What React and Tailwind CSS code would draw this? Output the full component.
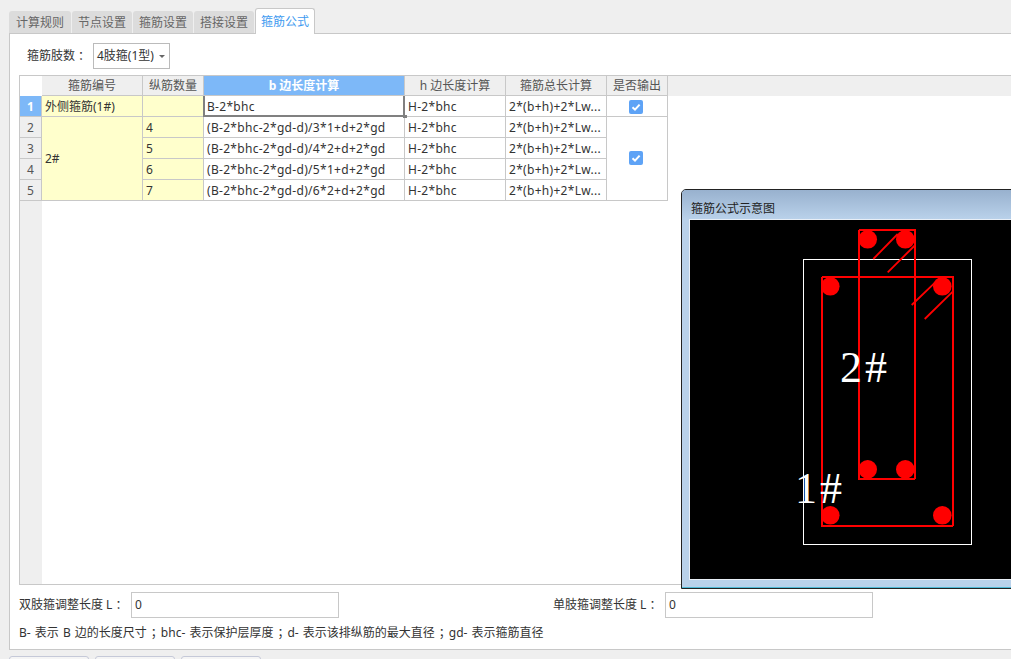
const cell = "border-r border-b border-[#c8c8c8] flex items-center overflow-hidden whitespace-nowrap pt-px";
const num = `${cell} bg-[#efefef] justify-center text-[#555]`;
const head = `${cell} bg-[#efefef] justify-center text-[#555]`;
const headActive = `${cell} bg-[#7db8f8] justify-center text-white font-bold`;
const txt = `${cell} bg-white pl-[3px] text-[#333] tracking-[0.3px]`;
const yel = `${cell} bg-[#ffffcc] pl-[3px] text-[#333]`;
const punct = "font-['Noto_Sans_CJK_TC']";

function Check() {
  return (
    <span className="w-[14px] h-[14px] rounded-[2px] bg-[#5ea3f6] flex items-center justify-center">
      <svg width="10" height="10" viewBox="0 0 10 10" fill="none">
        <path d="M1.5 5.2 L4 7.6 L8.6 2.6" stroke="#fff" strokeWidth="2" />
      </svg>
    </span>
  );
}

function Tab({ w, active, children }) {
  return (
    <div
      className={
        active
          ? `${w} h-[26px] -mb-px bg-white border border-b-0 border-[#c8c8c8] rounded-t-[3px] text-[#3f9bf0] flex items-center justify-center relative`
          : `${w} h-[22px] bg-[#dcdcdc] rounded-t-[3px] text-[#666] flex items-center justify-center pt-px`
      }
    >
      {children}
    </div>
  );
}

const rows = [
  ["2", "4", "(B-2*bhc-2*gd-d)/3*1+d+2*gd"],
  ["3", "5", "(B-2*bhc-2*gd-d)/4*2+d+2*gd"],
  ["4", "6", "(B-2*bhc-2*gd-d)/5*1+d+2*gd"],
  ["5", "7", "(B-2*bhc-2*gd-d)/6*2+d+2*gd"],
];

function Diagram() {
  return (
    <svg width="321" height="360" viewBox="690 220 321 360" className="block">
      <rect x="803.5" y="259.5" width="168" height="285" fill="none" stroke="#fff" strokeWidth="1" shapeRendering="crispEdges" />
      <g fill="none" stroke="#f00" strokeWidth="2">
        <rect x="822" y="277" width="131" height="249" rx="1" shapeRendering="crispEdges" />
        <rect x="859" y="230" width="56" height="249" rx="1" shapeRendering="crispEdges" />
        <path strokeWidth="1.8" d="M873.3 259 L897.7 234 M887.7 272.3 L915.3 245 M911.7 305 L936 281.7 M924.7 319 L952.7 291.7" />
      </g>
      <g fill="#f00">
        <circle cx="867.7" cy="239.3" r="9.3" />
        <circle cx="905.3" cy="239.3" r="9.3" />
        <circle cx="830.3" cy="286.3" r="9.3" />
        <circle cx="942.3" cy="286.3" r="9.3" />
        <circle cx="867.7" cy="469.3" r="9.3" />
        <circle cx="905.3" cy="469.3" r="9.3" />
        <circle cx="830.3" cy="515.3" r="9.3" />
        <circle cx="942.3" cy="515.3" r="9.3" />
      </g>
      <g fill="#fff" fontFamily="'Liberation Serif', serif" fontSize="44">
        <text x="840" y="382" letterSpacing="3">2#</text>
        <text x="795" y="503" letterSpacing="3">1#</text>
      </g>
    </svg>
  );
}

export default function App() {
  return (
    <div className="relative w-[1011px] h-[659px] overflow-hidden bg-[#efefef] text-[12px] leading-none text-[#333] font-['Noto_Sans','Noto_Sans_CJK_SC',sans-serif]">
      {/* tabs */}
      <div className="h-[33px] pl-[9px] flex items-end gap-px">
        <Tab w="w-[62px]">计算规则</Tab>
        <Tab w="w-[60px]">节点设置</Tab>
        <Tab w="w-[60px]">箍筋设置</Tab>
        <Tab w="w-[60px]">搭接设置</Tab>
        <Tab w="w-[60px]" active>箍筋公式</Tab>
      </div>

      {/* panel */}
      <div className="ml-[9px] w-[1010px] h-[617px] bg-white border border-[#c8c8c8]">
        <div className="h-[41px] pt-[9px] pl-[17px] flex items-start">
          <span className="w-[66px] h-[26px] flex items-center text-[#333]">箍筋肢数<span className={punct}>：</span></span>
          <div className="w-[77px] h-[26px] border border-[#bbb] flex items-center pl-[3px] gap-[5px]">
            <span>4肢箍(1型)</span>
            <span className="w-0 h-0 border-x-[3px] border-x-transparent border-t-[3px] border-t-[#666]" />
          </div>
        </div>

        {/* table */}
        <div className="relative ml-[9px] w-[1000px] h-[510px] border border-[#c8c8c8] bg-[linear-gradient(to_right,#efefef_22px,#fff_22px)]">
          <div className="bg-[#efefef] h-[20px]">
            <div className="w-[648px] grid grid-cols-[22px_101px_61px_201px_101px_101px_61px] grid-rows-[20px_21px_21px_21px_21px_21px]">
              <div className="bg-white" />
              <div className={head}>箍筋编号</div>
              <div className={head}>纵筋数量</div>
              <div className={headActive}>b 边长度计算</div>
              <div className={head}>h 边长度计算</div>
              <div className={head}>箍筋总长计算</div>
              <div className={head}>是否输出</div>

              <div className={headActive}>1</div>
              <div className={yel}>外侧箍筋(1#)</div>
              <div className={yel} />
              <div className={txt}>B-2*bhc</div>
              <div className={txt}>H-2*bhc</div>
              <div className={txt}>2*(b+h)+2*Lw...</div>
              <div className={`${cell} bg-white justify-center pr-[2px]`}><Check /></div>

              {rows.map(([n, c, f], i) => (
                <div key={n} className="contents">
                  <div className={num}>{n}</div>
                  {i === 0 && <div className={`${yel} row-span-4`}>2#</div>}
                  <div className={yel}>{c}</div>
                  <div className={txt}>{f}</div>
                  <div className={txt}>H-2*bhc</div>
                  <div className={txt}>2*(b+h)+2*Lw...</div>
                  {i === 0 && <div className={`${cell} row-span-4 bg-white justify-center pr-[2px] pb-[3px]`}><Check /></div>}
                </div>
              ))}
            </div>
          </div>
          {/* selected cell frame */}
          <div className="absolute left-[183px] top-[20px] w-[202px] h-[21px] border-x-2 border-b-2 border-[#808080]" />
          <div className="absolute left-[383px] top-[39px] w-[4px] h-[3px] bg-[#808080]" />
        </div>

        {/* inputs */}
        <div className="h-[33px] pt-[7px] pl-[9px] flex items-start">
          <span className="w-[112px] h-[26px] flex items-center">双肢箍调整长度 L<span className={punct}>：</span></span>
          <div className="w-[208px] h-[26px] border border-[#c8c8c8] flex items-center pl-[3px]">0</div>
          <span className="ml-[214px] w-[112px] h-[26px] flex items-center">单肢箍调整长度 L<span className={punct}>：</span></span>
          <div className="w-[208px] h-[26px] border border-[#c8c8c8] flex items-center pl-[3px]">0</div>
        </div>
        <div className="pl-[9px] h-[30px] flex items-center whitespace-pre [word-spacing:1px]">
          B- 表示 B 边的长度尺寸<span className={`${punct} mx-px`}>；</span>bhc- 表示保护层厚度<span className={`${punct} mx-px`}>；</span>d- 表示该排纵筋的最大直径<span className={`${punct} mx-px`}>；</span>gd- 表示箍筋直径
        </div>
      </div>

      {/* bottom buttons */}
      <div className="mt-[6px] ml-[9px] flex gap-[6px]">
        <div className="w-[80px] h-[10px] bg-[#f5f5f5] border border-[#c5c9d8] rounded-t-[3px]" />
        <div className="w-[80px] h-[10px] bg-[#f5f5f5] border border-[#c5c9d8] rounded-t-[3px]" />
        <div className="w-[80px] h-[10px] bg-[#f5f5f5] border border-[#c5c9d8] rounded-t-[3px]" />
      </div>

      {/* floating window */}
      <div className="absolute left-[681px] top-[189px] w-[340px] h-[400px] bg-[#b9d1ea] border border-[#222] rounded-tl-[5px] overflow-hidden">
        <div className="h-[29px] pl-[9px] pt-[8px] flex items-center text-[#222] bg-[linear-gradient(to_bottom,#98b1ce,#b9d1ea)]">
          箍筋公式示意图
        </div>
        <div className="ml-[7px] w-[330px] h-[361px] bg-black border-l border-t border-b border-[#e8eef6]">
          <Diagram />
        </div>
        <div className="mt-[7px] h-px bg-[#4fb8d4]" />
      </div>
    </div>
  );
}
